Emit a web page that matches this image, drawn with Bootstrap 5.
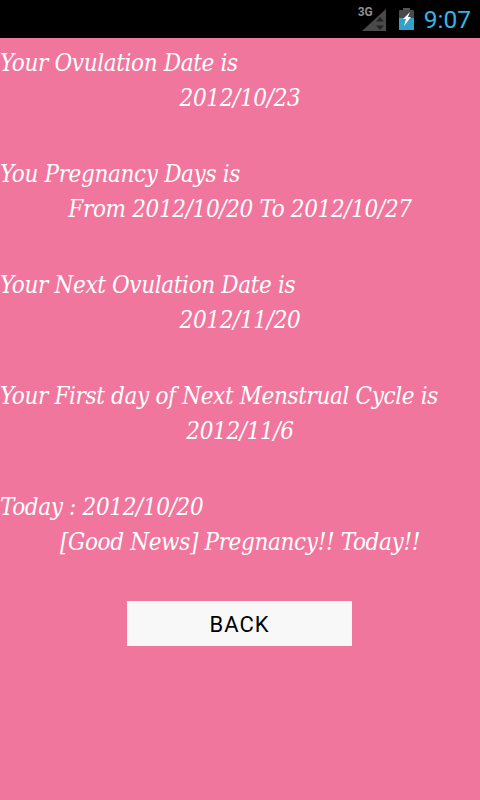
<!DOCTYPE html>
<html><head><meta charset="utf-8">
<link href="https://cdn.jsdelivr.net/npm/bootstrap@5.3.0/dist/css/bootstrap.min.css" rel="stylesheet">
<style>
html,body{height:800px;overflow:hidden}
body{background:#f1769e;font-family:"DejaVu Serif","Liberation Serif",serif}
.sbar{height:38px;background:#000;padding-right:9px}
.clock{font-family:Roboto,sans-serif;font-size:24.5px;color:#33b5e5;line-height:38px;margin-left:9px;padding-top:1px}
.netlabel{font-family:Roboto,sans-serif;font-weight:700;font-size:12px;color:#8f8f8f;position:absolute;left:-1px;top:-1px;line-height:12px;letter-spacing:-.1px;z-index:1}
.sig{position:relative;width:28px;height:24px;margin-right:11px}
.sig svg{position:absolute;left:3px;top:2px}
.info{padding-top:8px}
.blk{height:111px;color:#fff;font-style:italic;font-stretch:condensed;font-size:24px;letter-spacing:-.36px}
.ln{height:35px;line-height:35px;white-space:nowrap}
.backbtn{width:225px;height:45px;background:#f8f8f8;color:#000;border:0;border-radius:0;font-family:Roboto,sans-serif;font-size:22px;padding:1px 0 0;margin:0 0 0 -1px;letter-spacing:1px}
.backbtn:hover{background:#f8f8f8;color:#000}
</style></head>
<body>
<div class="sbar d-flex align-items-center justify-content-end">
  <div class="sig">
    <span class="netlabel">3G</span>
    <svg width="24" height="22" viewBox="0 0 24 22"><path d="M24 0V22H0Z" fill="#4a4a4a"/><path d="M18 8l4 4.500h-8zM18 21l4-4.500h-8z" fill="#222"/></svg>
  </div>
  <svg width="17" height="22" viewBox="0 0 17 22"><rect x="5" y="0" width="7" height="2" fill="#555"/><rect x="1" y="2" width="15" height="20" rx="1" fill="#4a4a4a"/><rect x="1" y="10" width="15" height="12" fill="#33a0c8"/><path d="M12 4L5 11h3l-2 7 7-9h-3z" fill="#fff"/></svg>
  <span class="clock">9:07</span>
</div>
<main class="info">
  <div class="blk"><div class="ln">Your Ovulation Date is</div><div class="ln text-center">2012/10/23</div></div>
  <div class="blk"><div class="ln">You Pregnancy Days is</div><div class="ln text-center">From 2012/10/20 To 2012/10/27</div></div>
  <div class="blk"><div class="ln">Your Next Ovulation Date is</div><div class="ln text-center">2012/11/20</div></div>
  <div class="blk"><div class="ln">Your First day of Next Menstrual Cycle is</div><div class="ln text-center">2012/11/6</div></div>
  <div class="blk"><div class="ln">Today : 2012/10/20</div><div class="ln text-center">[Good News] Pregnancy!! Today!!</div></div>
  <div class="text-center backwrap"><button class="btn backbtn" type="button">BACK</button></div>
</main>
<script src="https://cdn.jsdelivr.net/npm/bootstrap@5.3.0/dist/js/bootstrap.bundle.min.js"></script>
</body></html>
